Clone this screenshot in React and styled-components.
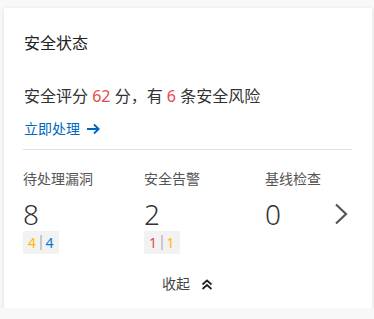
import React from 'react';
import styled, { createGlobalStyle } from 'styled-components';

const GlobalStyle = createGlobalStyle`
  html, body {
    margin: 0;
    padding: 0;
    background: #f8f8f8;
  }
  body {
    font-family: "Noto Sans", "Noto Sans CJK SC", sans-serif;
  }
`;

const Page = styled.div`
  padding: 8px 2px 0 4px;
  width: 368px;
`;

const Card = styled.div`
  background: #fff;
  box-shadow: 0 1px 4px rgba(0, 0, 0, 0.12);
  padding: 23px 20px 14px 19px;
  display: flex;
  flex-direction: column;
`;

const Title = styled.div`
  font-size: 16px;
  line-height: 24px;
  color: #222;
  padding-left: 1px;
`;

const Summary = styled.div`
  margin-top: 29px;
  font-size: 16px;
  line-height: 24px;
  color: #333;
  padding-left: 1px;
`;

const Num = styled.span`
  color: ${(p) => p.color};
`;

const Link = styled.a`
  margin-top: 11px;
  display: inline-flex;
  align-items: center;
  gap: 6px;
  font-size: 14px;
  line-height: 20px;
  color: #0067c0;
  text-decoration: none;
  padding-left: 1px;
  align-self: flex-start;
`;

const Divider = styled.div`
  margin-top: 10px;
  height: 1px;
  background: #e0e0e0;
`;

const Stats = styled.div`
  display: flex;
  margin-top: 19px;
`;

const Stat = styled.div`
  flex: ${(p) => (p.last ? '1 1 auto' : '0 0 121px')};
  display: flex;
  flex-direction: column;
  align-items: flex-start;
`;

const Label = styled.div`
  font-size: 14px;
  line-height: 20px;
  color: #555;
`;

const Value = styled.div`
  margin-top: 9px;
  font-size: 28px;
  line-height: 32px;
  font-weight: 300;
  color: #333;
`;

const Badge = styled.div`
  margin-top: 1px;
  height: 23px;
  padding: 0 5px;
  background: #f2f2f2;
  display: flex;
  align-items: center;
  gap: 4px;
  font-size: 14px;
`;

const Sep = styled.span`
  width: 1.5px;
  height: 15px;
  background: #c8c8c8;
`;

const Chevron = styled.div`
  margin-top: 34px;
  margin-right: 4px;
  display: flex;
  align-self: flex-start;
`;

const Collapse = styled.div`
  margin-top: 20px;
  display: flex;
  justify-content: center;
  align-items: center;
  gap: 11px;
  font-size: 14px;
  line-height: 20px;
  color: #444;
`;

const Arrow = () => (
  <svg width="15" height="12" viewBox="0 0 15 12">
    <path d="M1 6h12M8 1.5 12.7 6 8 10.5" stroke="#0067c0" strokeWidth="1.8" fill="none" />
  </svg>
);

const Right = () => (
  <svg width="14" height="22" viewBox="0 0 14 22">
    <path d="M2 1.5 12 11 2 20.5" stroke="#555" strokeWidth="2.2" fill="none" />
  </svg>
);

const DoubleUp = () => (
  <svg width="12" height="11" viewBox="0 0 12 11">
    <path d="M1.5 5.5 6 1.5 10.5 5.5M1.5 10 6 6 10.5 10" stroke="#222" strokeWidth="1.7" fill="none" />
  </svg>
);

export default function App() {
  return (
    <>
      <GlobalStyle />
      <Page>
        <Card>
          <Title>安全状态</Title>
          <Summary>
            安全评分 <Num color="#e5484d">62</Num> 分，有 <Num color="#e5484d">6</Num> 条安全风险
          </Summary>
          <Link href="#">
            立即处理 <Arrow />
          </Link>
          <Divider />
          <Stats>
            <Stat>
              <Label>待处理漏洞</Label>
              <Value>8</Value>
              <Badge>
                <Num color="#ffb900">4</Num>
                <Sep />
                <Num color="#0078d4">4</Num>
              </Badge>
            </Stat>
            <Stat>
              <Label>安全告警</Label>
              <Value>2</Value>
              <Badge>
                <Num color="#e5484d">1</Num>
                <Sep />
                <Num color="#ffb900">1</Num>
              </Badge>
            </Stat>
            <Stat last>
              <Label>基线检查</Label>
              <Value>0</Value>
            </Stat>
            <Chevron>
              <Right />
            </Chevron>
          </Stats>
          <Collapse>
            收起 <DoubleUp />
          </Collapse>
        </Card>
      </Page>
    </>
  );
}
